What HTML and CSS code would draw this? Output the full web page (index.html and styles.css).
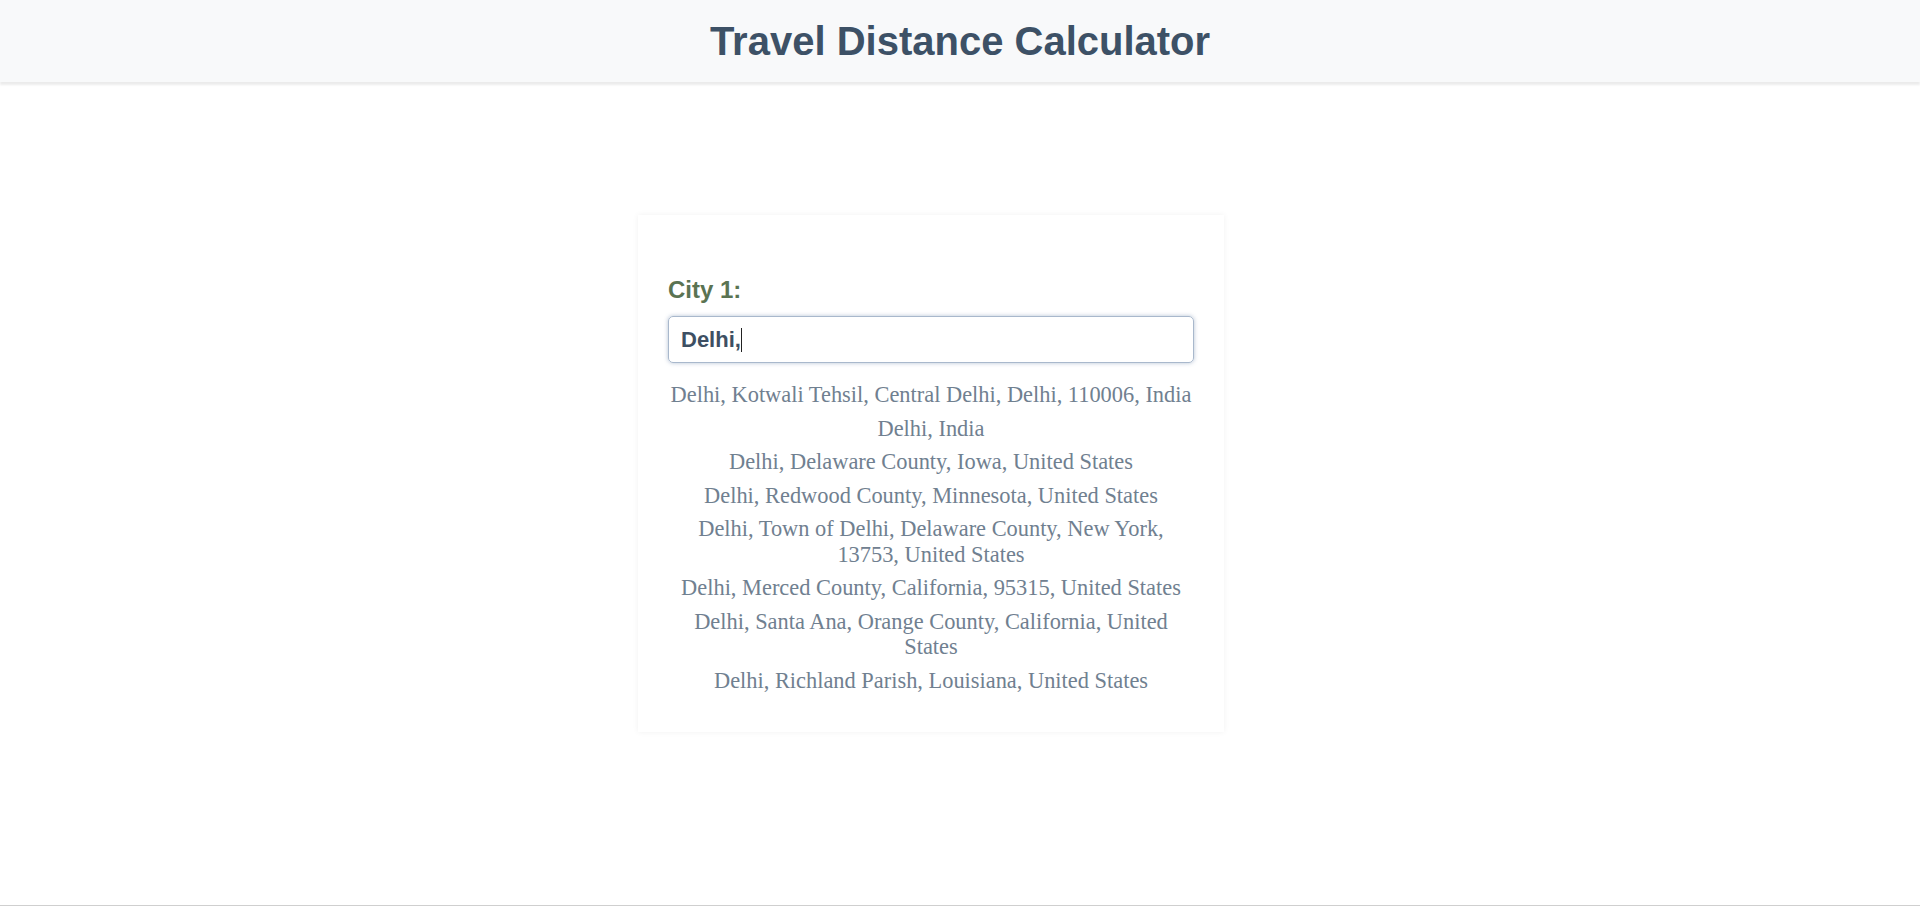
FILE: index.html
```html
<!DOCTYPE html>
<html lang="en">
<head>
<meta charset="utf-8">
<title>Travel Distance Calculator</title>
<link rel="stylesheet" href="styles.css">
</head>
<body>
<header class="topbar">
  <h1 class="title">Travel Distance Calculator</h1>
</header>
<main class="main">
  <section class="card">
    <label class="label" for="city1">City 1:</label>
    <div class="input-box"><span class="input-text">Delhi,</span><span class="caret"></span></div>
    <ul class="suggestions">
      <li>Delhi, Kotwali Tehsil, Central Delhi, Delhi, 110006, India</li>
      <li>Delhi, India</li>
      <li>Delhi, Delaware County, Iowa, United States</li>
      <li>Delhi, Redwood County, Minnesota, United States</li>
      <li>Delhi, Town of Delhi, Delaware County, New York, 13753, United States</li>
      <li>Delhi, Merced County, California, 95315, United States</li>
      <li>Delhi, Santa Ana, Orange County, California, United States</li>
      <li>Delhi, Richland Parish, Louisiana, United States</li>
    </ul>
  </section>
</main>
</body>
</html>
```
FILE: styles.css
```css
* { box-sizing: border-box; }
html, body { margin: 0; padding: 0; }
body {
  background: #ffffff;
  font-family: "Liberation Sans", Arial, sans-serif;
  min-height: 100vh;
  display: flex;
  flex-direction: column;
  border-bottom: 1px solid #cfcfcf;
}
.topbar {
  height: 82px;
  background: #f8f9fa;
  box-shadow: 0 3px 2px rgba(0, 0, 0, 0.08);
  display: flex;
  align-items: center;
  justify-content: center;
}
.title {
  margin: 0;
  font-size: 40px;
  font-weight: bold;
  color: #3d5166;
}
.main {
  flex: 1;
  display: flex;
  justify-content: center;
  align-items: flex-start;
  padding: 133px 58px 0 0;
}
.card {
  width: 586px;
  background: #ffffff;
  box-shadow: 0 0 6px rgba(0, 0, 0, 0.06);
  padding: 61px 30px 39px 30px;
  display: flex;
  flex-direction: column;
}
.label {
  font-size: 24px;
  font-weight: bold;
  color: #5a7352;
  margin-bottom: 12px;
}
.input-box {
  height: 47px;
  border: 1px solid #a9b8cc;
  border-radius: 5px;
  box-shadow: 0 0 4px rgba(90, 120, 160, 0.45);
  padding: 0 12px;
  display: flex;
  align-items: center;
}
.input-text {
  font-size: 22px;
  font-weight: bold;
  color: #3d4f63;
}
.caret {
  width: 1px;
  height: 24px;
  background: #222;
}
.suggestions {
  list-style: none;
  margin: 19px 0 0;
  padding: 0;
  font-family: "Liberation Serif", "Times New Roman", serif;
  font-size: 22.4px;
  color: #708090;
  text-align: center;
  display: flex;
  flex-direction: column;
  gap: 8px;
}
.suggestions li { line-height: 25.5px; }
```
